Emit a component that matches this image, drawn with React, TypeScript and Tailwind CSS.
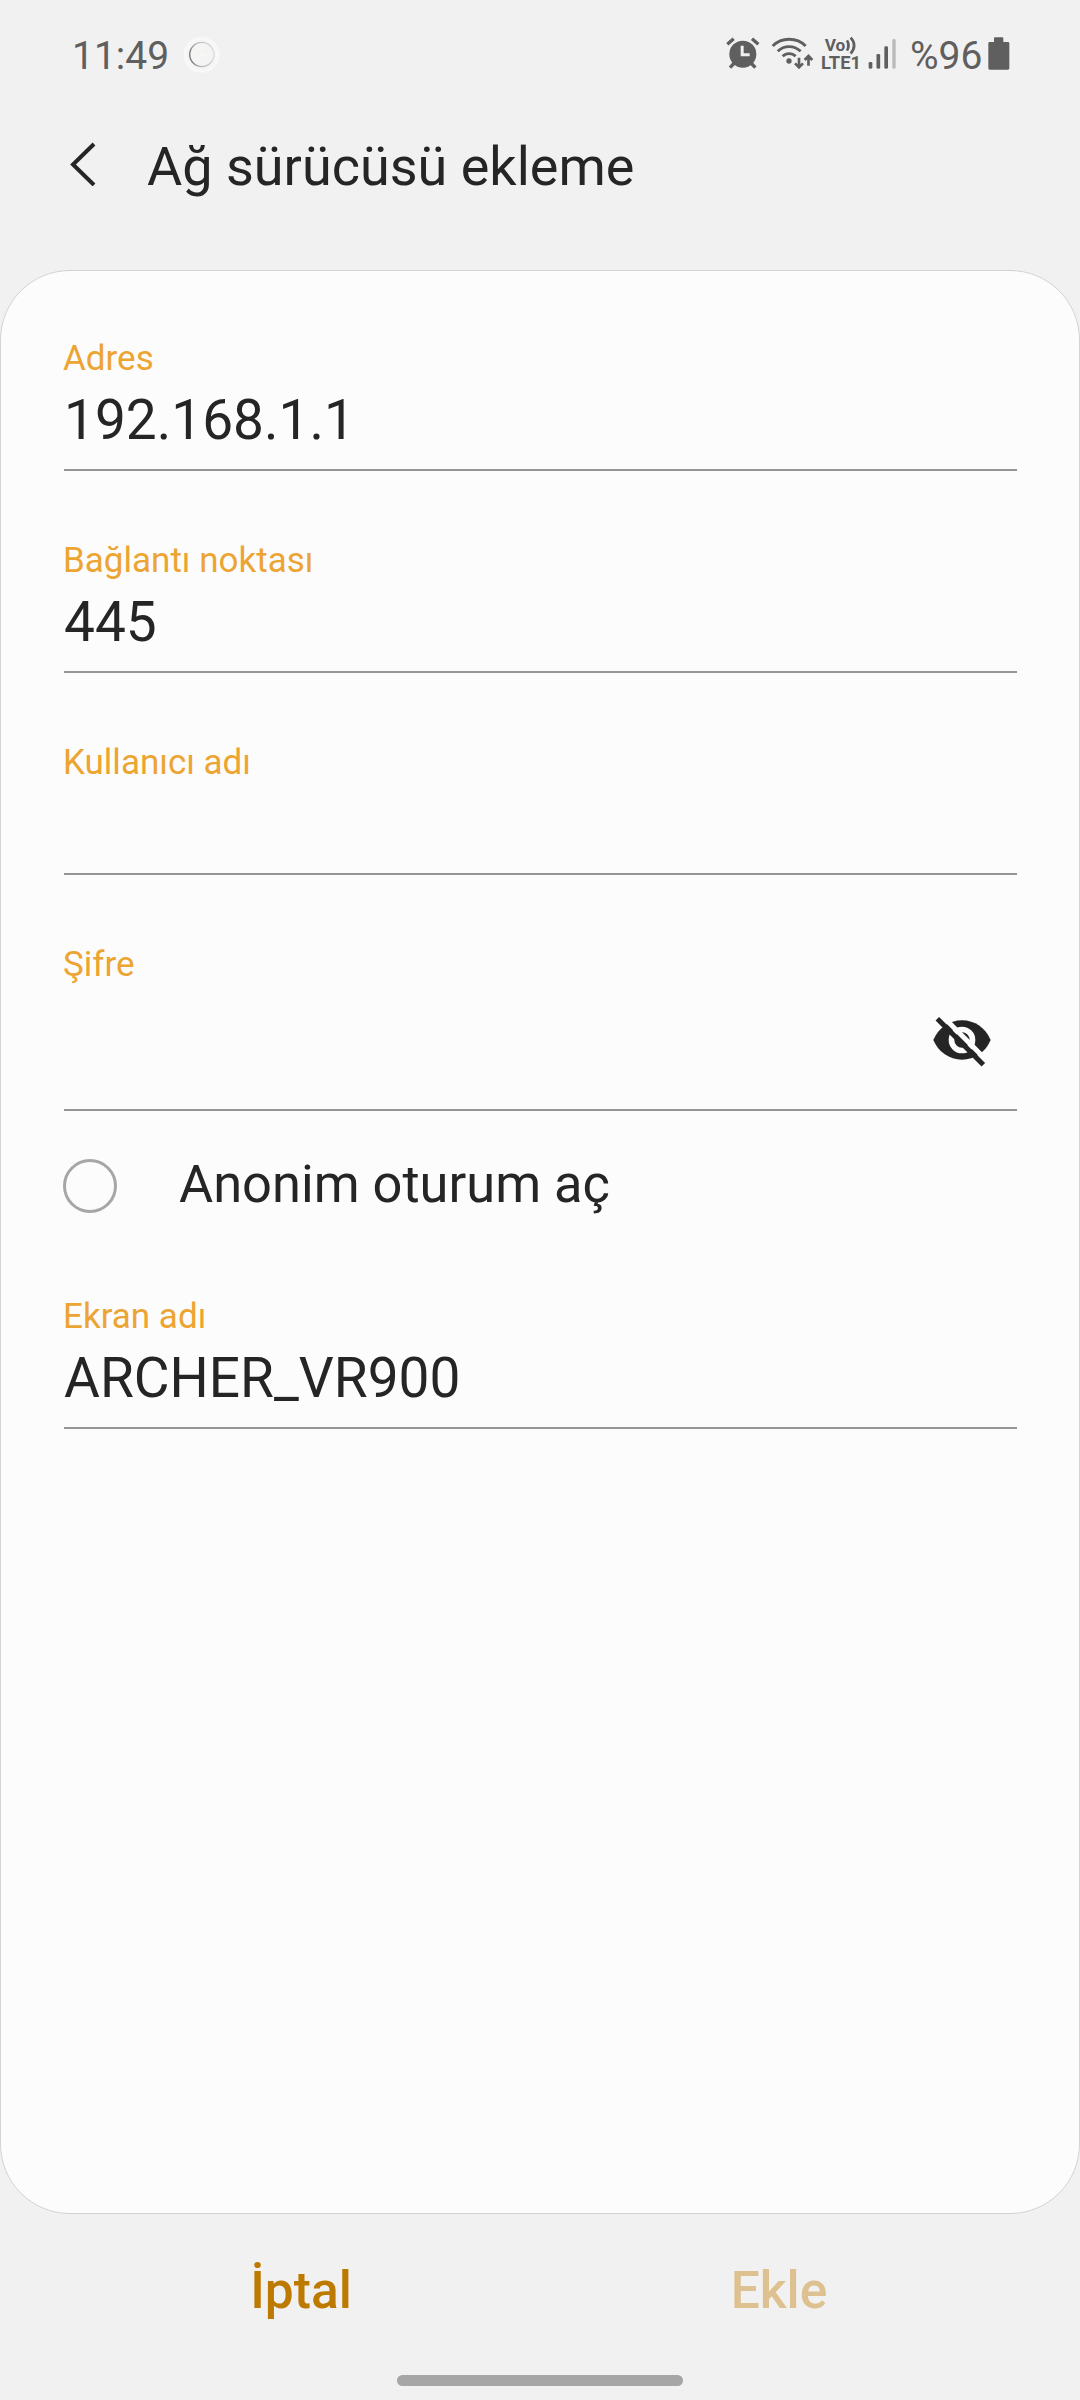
import { useState } from "react";
import type { ReactNode } from "react";

function DialIcon() {
  return (
    <svg viewBox="429 48 110 110" className="h-[37px] w-[37px]" fill="none">
      <defs>
        <linearGradient id="dial-rim" x1="0" y1="0.6" x2="1" y2="0.4">
          <stop offset="0" stopColor="#77736f" />
          <stop offset="0.3" stopColor="#b5b2ae" />
          <stop offset="1" stopColor="#dedcda" />
        </linearGradient>
      </defs>
      <circle cx="484" cy="103" r="46" fill="#f5f5f5" />
      <circle cx="484" cy="104" r="49" stroke="#fbfbfb" strokeWidth="9" strokeDasharray="4 2" />
      <circle cx="485" cy="103" r="36" fill="#f4f4f4" stroke="url(#dial-rim)" strokeWidth="4" />
      <path d="M485 83V106H502" stroke="#fbf8f0" strokeWidth="4" />
    </svg>
  );
}

function AlarmIcon() {
  return (
    <svg viewBox="79 49 102 99" className="h-[33px] w-[34px]" fill="none" stroke="#5f5f5f">
      <circle cx="129.500" cy="103.500" r="40.500" fill="#5f5f5f" stroke="none" />
      <path d="M83 74L102 57M176 74L157 57" strokeWidth="10" />
      <path d="M104 130L91 144M154 130L167 144" strokeWidth="10" />
      <path d="M127.500 78V105.500H150" stroke="#f1f1f1" strokeWidth="9" />
    </svg>
  );
}

function WifiIcon() {
  return (
    <svg viewBox="214 49 129 99" className="h-[33px] w-[43px]" fill="none" stroke="#5f5f5f">
      <path
        d="M219 79C246 52 291 52 318 79M234 95C253 76 283 76 303 95M249 110C260 99 277 99 288 110"
        strokeWidth="8.500"
      />
      <circle cx="268" cy="124" r="8" fill="#5f5f5f" stroke="none" />
      <path d="M298 114V142M286 131L298 143L310 131" strokeWidth="8" />
      <path d="M326.500 138V110M315 121L326.500 109L338 121" strokeWidth="8" />
    </svg>
  );
}

function VolteIcon() {
  return (
    <svg viewBox="365 49 120 102" className="h-[34px] w-[40px] overflow-visible" fill="#5f5f5f">
      <text x="376" y="94" textLength="62" lengthAdjust="spacingAndGlyphs" className="text-[52px] font-bold">
        Vo
      </text>
      <path
        d="M443 62Q452 77 443 93M454 54Q475 77 454 102"
        fill="none"
        stroke="#5f5f5f"
        strokeWidth="8"
      />
      <text x="365" y="147" textLength="120" lengthAdjust="spacingAndGlyphs" className="text-[53px] font-bold">
        LTE1
      </text>
    </svg>
  );
}

function SignalIcon() {
  return (
    <svg viewBox="505 55 84 93" className="h-[31px] w-[28px]" fill="#5f5f5f">
      <rect x="507" y="127" width="11" height="20" rx="4" />
      <rect x="530.500" y="103" width="11" height="44" rx="4" />
      <rect x="554" y="80" width="11" height="67" rx="4" />
      <rect x="578" y="58" width="10" height="89" rx="4" fill="#bababa" />
    </svg>
  );
}

function BatteryIcon() {
  return (
    <svg viewBox="863 51 66 99" className="h-[33px] w-[22px]" fill="#5f5f5f">
      <path d="M881 55q0-3 3-3h22q3 0 3 3v11h14q4 0 4 4v75q0 4-4 4h-55q-4 0-4-4v-75q0-4 4-4h13z" />
    </svg>
  );
}

function EyeOffIcon() {
  return (
    <svg viewBox="158 166 180 156" className="h-[52px] w-[60px]" fill="#252525">
      <mask id="eye-cut" maskUnits="userSpaceOnUse" x="158" y="166" width="180" height="156">
        <rect x="158" y="166" width="180" height="156" fill="white" />
        <circle cx="248" cy="241" r="31.500" fill="none" stroke="black" strokeWidth="17" />
        <path d="M180 160L339 319" stroke="black" strokeWidth="15" />
      </mask>
      <path
        d="M162 241C177 205 210 182 248 182S319 205 334 241C319 277 286 300 248 300S177 277 162 241Z"
        mask="url(#eye-cut)"
      />
      <path d="M174 177L312 315" stroke="#252525" strokeWidth="15" />
    </svg>
  );
}

function StatusBar() {
  return (
    <div className="flex h-[110px] items-start justify-between pl-[72px] pr-[70px] pt-[36px] text-[39px] leading-[40px] text-[#5f5f5f]">
      <div className="flex">
        <span className="w-[111px]">11:49</span>
        <DialIcon />
      </div>
      <div className="flex">
        <AlarmIcon />
        <div className="ml-[11px]">
          <WifiIcon />
        </div>
        <div className="ml-[7px]">
          <VolteIcon />
        </div>
        <div className="ml-[7px] mt-[2px]">
          <SignalIcon />
        </div>
        <span className="ml-[14px] w-[78px] whitespace-nowrap">%96</span>
        <div className="mt-px">
          <BatteryIcon />
        </div>
      </div>
    </div>
  );
}

interface FieldProps {
  label: string;
  value?: string;
  tall?: boolean;
  children?: ReactNode;
}

function Field({ label, value, tall, children }: FieldProps) {
  return (
    <div className={`flex flex-col border-b-2 border-[#959595] ${tall ? "h-[166px]" : "h-[132px]"}`}>
      <span className="-ml-px text-[35px] leading-[40px] text-[#eca433]">{label}</span>
      <div className="mt-[9px] flex justify-between text-[55px] leading-[64px] text-[#252525]">
        <span>{value}</span>
        {children}
      </div>
    </div>
  );
}

export default function App() {
  const [anonymous, setAnonymous] = useState(false);

  return (
    <div className="flex h-[2400px] w-[1080px] flex-col overflow-hidden bg-[#f1f1f1] font-['Roboto',sans-serif]">
      <StatusBar />

      {/* Header */}
      <header className="flex h-[160px] items-start pl-[69px] pt-[25px]">
        <svg viewBox="0 0 28 44" className="mt-[7px] h-[44px] w-[28px]" fill="none" stroke="#252525">
          <path d="M25 2L4 22.500L25 43" strokeWidth="4" />
        </svg>
        <h1 className="ml-[50px] text-[54px] leading-[64px] text-[#252525]">Ağ sürücüsü ekleme</h1>
      </header>

      {/* Form */}
      <main className="flex h-[1944px] flex-col rounded-[70px] border border-[#d3d3d3] bg-[#fcfcfc] pl-[63px] pr-[62px] pt-[68px]">
        <div className="flex flex-col gap-[70px]">
          <Field label="Adres" value="192.168.1.1" />
          <Field label="Bağlantı noktası" value="445" />
          <Field label="Kullanıcı adı" />
          <Field label="Şifre" tall>
            <button type="button" className="mr-[25px] mt-[21px] h-[52px]">
              <EyeOffIcon />
            </button>
          </Field>
        </div>

        <button
          type="button"
          onClick={() => setAnonymous(!anonymous)}
          className="mt-[48px] flex h-[54px] items-center text-left"
        >
          <span className="-ml-px flex h-[54px] w-[54px] items-center justify-center rounded-full border-[3px] border-[#a6a6a6]">
            {anonymous && <span className="h-7 w-7 rounded-full bg-[#eca433]" />}
          </span>
          <span className="mb-[4px] ml-[62px] text-[52.4px] leading-[60px] text-[#252525]">Anonim oturum aç</span>
        </button>

        <div className="mt-[84px]">
          <Field label="Ekran adı" value="ARCHER_VR900" />
        </div>
      </main>

      {/* Actions */}
      <footer className="flex h-[161px] justify-center gap-[6px] pt-[47px] text-[51.5px] font-medium leading-[60px]">
        <button type="button" className="h-[60px] w-[472px] text-[#bd7a00]">
          İptal
        </button>
        <button type="button" className="h-[60px] w-[472px] text-[#dec190]">
          Ekle
        </button>
      </footer>
      <div className="mx-auto h-[11px] w-[286px] rounded-full bg-[#a6a6a6]" />
    </div>
  );
}
